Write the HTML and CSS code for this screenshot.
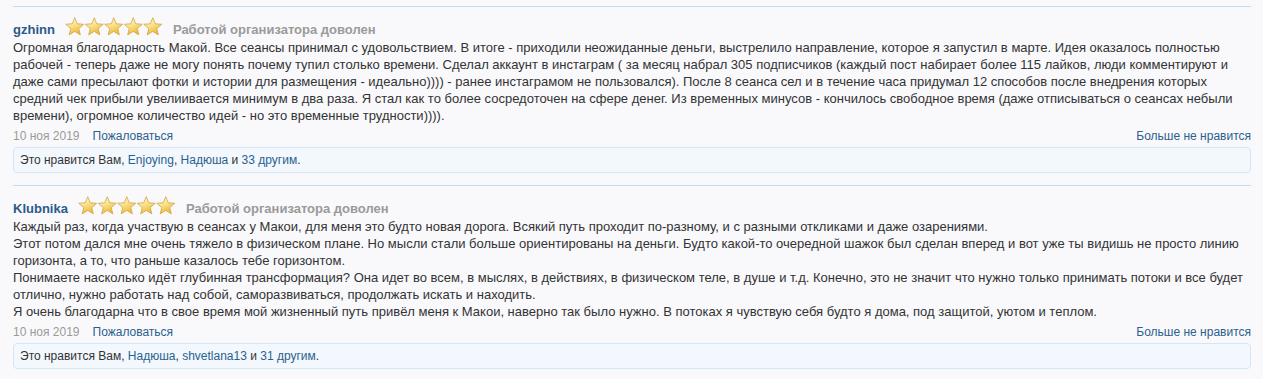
FILE: index.html
```html
<!DOCTYPE html>
<html lang="ru">
<head>
<meta charset="utf-8">
<title>Отзывы</title>
<link rel="stylesheet" href="styles.css">
</head>
<body>
<div class="list">
  <div class="review">
    <div class="head">
      <a class="name" href="#">gzhinn</a>
      <svg class="stars" width="98" height="19" viewBox="0 0 98 19">
        <defs>
          <linearGradient id="sg1" x1="0" y1="0" x2="0.4" y2="1">
            <stop offset="0" stop-color="#fffce6"/>
            <stop offset="0.45" stop-color="#fce89a"/>
            <stop offset="1" stop-color="#ecbb3a"/>
          </linearGradient>
          <path id="st1" d="M9.75 0.7 L12.22 6.8 L18.78 7.26 L13.74 11.5 L15.33 17.89 L9.75 14.4 L4.17 17.89 L5.76 11.5 L0.72 7.26 L7.28 6.8Z" fill="url(#sg1)" stroke="#d0a545" stroke-width="0.8" stroke-linejoin="round"/>
        </defs>
        <use href="#st1" x="0"/>
        <use href="#st1" x="19.5"/>
        <use href="#st1" x="39"/>
        <use href="#st1" x="58.5"/>
        <use href="#st1" x="78"/>
      </svg>
      <span class="verdict">Работой организатора доволен</span>
    </div>
    <div class="text">Огромная благодарность Макой. Все сеансы принимал с удовольствием. В итоге - приходили неожиданные деньги, выстрелило направление, которое я запустил в марте. Идея оказалось полностью<br>рабочей - теперь даже не могу понять почему тупил столько времени. Сделал аккаунт в инстаграм ( за месяц набрал 305 подписчиков (каждый пост набирает более 115 лайков, люди комментируют и<br>даже сами пресылают фотки и истории для размещения - идеально)))) - ранее инстаграмом не пользовался). После 8 сеанса сел и в течение часа придумал 12 способов после внедрения которых<br>средний чек прибыли увелиивается минимум в два раза. Я стал как то более сосредоточен на сфере денег. Из временных минусов - кончилось свободное время (даже отписываться о сеансах небыли<br>времени), огромное количество идей - но это временные трудности)))).</div>
    <div class="meta">
      <div class="meta-left"><span class="date">10 ноя 2019</span><a class="link" href="#">Пожаловаться</a></div>
      <a class="link" href="#">Больше не нравится</a>
    </div>
    <div class="likes">Это нравится Вам, <a class="link" href="#">Enjoying</a>, <a class="link" href="#">Надюша</a> и <a class="link" href="#">33 другим</a>.</div>
  </div>

  <div class="review">
    <div class="head">
      <a class="name" href="#">Klubnika</a>
      <svg class="stars" width="98" height="19" viewBox="0 0 98 19">
        <defs>
          <linearGradient id="sg2" x1="0" y1="0" x2="0.4" y2="1">
            <stop offset="0" stop-color="#fffce6"/>
            <stop offset="0.45" stop-color="#fce89a"/>
            <stop offset="1" stop-color="#ecbb3a"/>
          </linearGradient>
          <path id="st2" d="M9.75 0.7 L12.22 6.8 L18.78 7.26 L13.74 11.5 L15.33 17.89 L9.75 14.4 L4.17 17.89 L5.76 11.5 L0.72 7.26 L7.28 6.8Z" fill="url(#sg2)" stroke="#d0a545" stroke-width="0.8" stroke-linejoin="round"/>
        </defs>
        <use href="#st2" x="0"/>
        <use href="#st2" x="19.5"/>
        <use href="#st2" x="39"/>
        <use href="#st2" x="58.5"/>
        <use href="#st2" x="78"/>
      </svg>
      <span class="verdict">Работой организатора доволен</span>
    </div>
    <div class="text">Каждый раз, когда участвую в сеансах у Макои, для меня это будто новая дорога. Всякий путь проходит по-разному, и с разными откликами и даже озарениями.<br>Этот потом дался мне очень тяжело в физическом плане. Но мысли стали больше ориентированы на деньги. Будто какой-то очередной шажок был сделан вперед и вот уже ты видишь не просто линию<br>горизонта, а то, что раньше казалось тебе горизонтом.<br>Понимаете насколько идёт глубинная трансформация? Она идет во всем, в мыслях, в действиях, в физическом теле, в душе и т.д. Конечно, это не значит что нужно только принимать потоки и все будет<br>отлично, нужно работать над собой, саморазвиваться, продолжать искать и находить.<br>Я очень благодарна что в свое время мой жизненный путь привёл меня к Макои, наверно так было нужно. В потоках я чувствую себя будто я дома, под защитой, уютом и теплом.</div>
    <div class="meta">
      <div class="meta-left"><span class="date">10 ноя 2019</span><a class="link" href="#">Пожаловаться</a></div>
      <a class="link" href="#">Больше не нравится</a>
    </div>
    <div class="likes">Это нравится Вам, <a class="link" href="#">Надюша</a>, <a class="link" href="#">shvetlana13</a> и <a class="link" href="#">31 другим</a>.</div>
  </div>
</div>
</body>
</html>
```

FILE: styles.css
```css
html, body {
  margin: 0;
  padding: 0;
  background: #f9f9fc;
}

body {
  font-family: "Liberation Sans", Arial, sans-serif;
  font-size: 12px;
  color: #333;
}

.list {
  width: 1238px;
  margin-left: 13px;
  padding-top: 6px;
}

.review {
  border-top: 1px solid #c7dbec;
  padding-top: 10px;
  padding-bottom: 12px;
}

.head {
  display: flex;
  align-items: flex-start;
  height: 21px;
}

.name {
  font-size: 13px;
  font-weight: bold;
  color: #2a5b8a;
  text-decoration: none;
  line-height: 19px;
  padding-top: 3px;
  margin-right: 10px;
}

.stars {
  display: block;
  flex: none;
  margin-right: 10px;
}

.verdict {
  font-size: 13px;
  font-weight: bold;
  color: #9a9a9a;
  line-height: 19px;
  padding-top: 3px;
}

.text {
  font-size: 13px;
  line-height: 17px;
  margin-top: 1px;
  white-space: nowrap;
}

.meta {
  display: flex;
  justify-content: space-between;
  line-height: 16px;
  margin-top: 4px;
}

.meta-left {
  display: flex;
  gap: 13px;
}

.date {
  color: #9a9a9a;
}

.link {
  color: #2b5f8f;
  text-decoration: none;
}

.likes {
  margin-top: 3px;
  border: 1px solid #d5e7f6;
  border-radius: 4px;
  background: #f2f8fd;
  padding: 5px 6px 5px 6px;
  line-height: 14px;
}
```
